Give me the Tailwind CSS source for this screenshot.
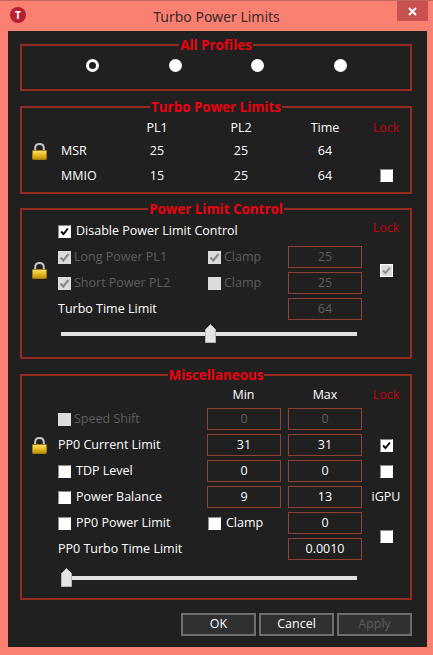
<!DOCTYPE html>
<html>
<head>
<meta charset="utf-8">
<script src="https://cdn.jsdelivr.net/npm/@tailwindcss/browser@4"></script>
</head>
<body class="m-0">
<svg width="0" height="0" class="absolute">
  <defs>
    <linearGradient id="gold" x1="0" y1="0" x2="0" y2="1"><stop offset="0" stop-color="#f8e27a"/><stop offset="0.5" stop-color="#e8bb1e"/><stop offset="1" stop-color="#b98a0c"/></linearGradient>
    <symbol id="lock" viewBox="0 0 15 17"><path d="M3.2 8V5.2C3.2 2.6 5 1 7.5 1s4.3 1.6 4.3 4.2V8" fill="none" stroke="#c4c4c4" stroke-width="2"/><rect x="0.5" y="7.5" width="14" height="9" rx="0.8" fill="url(#gold)" stroke="#a37c10"/></symbol>
    <symbol id="tick" viewBox="0 0 13 13"><path d="M2.5 6.5l2.8 3L10.5 3" fill="none" stroke="currentColor" stroke-width="2.2"/></symbol>
  </defs>
</svg>
<div class="w-[433px] h-[655px] bg-[#fa8072] border-t border-t-[#c4685c] relative overflow-hidden font-['Open_Sans','Noto_Sans',sans-serif] text-[12.5px] text-white">
  <!-- title bar -->
  <div class="h-[30px] relative flex items-center justify-center text-[14px] text-[#3a2a2a] font-['Noto_Sans',sans-serif]">
    <div class="absolute left-[10px] top-[6px] w-[16px] h-[16px] rounded-full bg-[#b71f33] flex items-center justify-center text-[10px] font-bold text-white leading-none">T</div>
    <span>Turbo Power Limits</span>
    <div class="absolute left-[397px] top-0 w-[31px] h-[20px] bg-[#c75050] flex items-center justify-center">
      <svg width="9" height="9" viewBox="0 0 9 9"><path d="M1 1l7 7M8 1l-7 7" stroke="#fff" stroke-width="2"/></svg>
    </div>
  </div>
  <!-- panel -->
  <div class="ml-[8px] w-[419px] h-[616px] bg-[#202020] pt-[13px] pl-[12px]">
    <!-- All profiles -->
    <div class="relative w-[392px] h-[47px] border-2 border-[#962a20]">
      <div class="absolute left-0 right-0 -top-[10px] flex justify-center"><span class="bg-[#202020] px-[1px] leading-[18px] text-[13.4px] font-bold text-[#ee0010]">All Profiles</span></div>
      <div class="grid grid-cols-[77px_83px_82px_83px] pt-[13px]">
        <div class="w-[13px] h-[13px] rounded-full border-[3px] border-white bg-[#202020] col-start-1 justify-self-end"></div>
        <div class="w-[13px] h-[13px] rounded-full bg-white justify-self-end"></div>
        <div class="w-[13px] h-[13px] rounded-full bg-white justify-self-end"></div>
        <div class="w-[13px] h-[13px] rounded-full bg-white justify-self-end"></div>
      </div>
    </div>
    <!-- Turbo Power Limits -->
    <div class="relative w-[392px] h-[88px] mt-[15px] border-2 border-[#962a20]">
      <div class="absolute left-0 right-0 -top-[10px] flex justify-center"><span class="bg-[#202020] px-[1px] leading-[18px] text-[13.4px] font-bold text-[#ee0010]">Turbo Power Limits</span></div>
      <div class="grid grid-cols-[29px_59px_74px_10px_74px_10px_74px_48px] ml-[10px] pt-[9px] items-center text-center">
        <div class="h-[22px] col-start-3 leading-[22px]">PL1</div>
        <div class="h-[22px] col-start-5 leading-[22px]">PL2</div>
        <div class="h-[22px] col-start-7 leading-[22px]">Time</div>
        <div class="h-[22px] col-start-8 leading-[22px] text-[#c4000e]">Lock</div>
        <div class="h-[24px] col-start-1 flex items-center"><svg width="15" height="17"><use href="#lock"/></svg></div>
        <div class="h-[24px] col-start-2 text-left leading-[24px]">MSR</div>
        <div class="h-[24px] col-start-3 leading-[24px]">25</div>
        <div class="h-[24px] col-start-5 leading-[24px]">25</div>
        <div class="h-[24px] col-start-7 leading-[24px]">64</div>
        <div class="h-[26px] col-start-2 text-left leading-[26px]">MMIO</div>
        <div class="h-[26px] col-start-3 leading-[26px]">15</div>
        <div class="h-[26px] col-start-5 leading-[26px]">25</div>
        <div class="h-[26px] col-start-7 leading-[26px]">64</div>
        <div class="h-[26px] col-start-8 flex items-center justify-center -mt-[1px]"><div class="w-[13px] h-[13px] bg-white border border-[#8a8a8a] border-r-white border-b-white"></div></div>
      </div>
    </div>
    <!-- Power Limit Control -->
    <div class="relative w-[392px] h-[151px] mt-[14px] border-2 border-[#962a20]">
      <div class="absolute left-0 right-0 -top-[10px] flex justify-center"><span class="bg-[#202020] px-[1px] leading-[18px] text-[13.4px] font-bold text-[#ee0010]">Power Limit Control</span></div>
      <div class="grid grid-cols-[26px_150px_80px_74px_48px] grid-rows-[26px_26px_26px_26px] ml-[10px] pt-[8px] items-center">
        <label class="col-start-2 col-span-2 flex items-center gap-[5px]"><span class="w-[13px] h-[13px] bg-white border border-[#8a8a8a] border-r-white border-b-white text-black flex"><svg width="11" height="11"><use href="#tick"/></svg></span>Disable Power Limit Control</label>
        <div class="col-start-5 row-start-1 text-center text-[#c4000e] -mt-[5px]">Lock</div>
        <div class="col-start-1 row-start-2 row-span-2 flex items-center"><svg width="15" height="17"><use href="#lock"/></svg></div>
        <label class="col-start-2 row-start-2 flex items-center gap-[3px] text-[#5e5e5e]"><span class="w-[13px] h-[13px] bg-[#dcdcdc] text-[#8a8a8a] flex"><svg width="13" height="13"><use href="#tick"/></svg></span>Long Power PL1</label>
        <label class="col-start-3 row-start-2 flex items-center gap-[3px] text-[#5e5e5e]"><span class="w-[13px] h-[13px] bg-[#dcdcdc] text-[#8a8a8a] flex"><svg width="13" height="13"><use href="#tick"/></svg></span>Clamp</label>
        <div class="col-start-4 row-start-2 h-[22px] border border-[#96402f] text-center leading-[20px] text-[#5e5e5e]">25</div>
        <div class="col-start-5 row-start-2 row-span-2 flex justify-center"><span class="w-[13px] h-[13px] bg-[#dcdcdc] border border-white text-[#8a8a8a] flex"><svg width="11" height="11"><use href="#tick"/></svg></span></div>
        <label class="col-start-2 row-start-3 flex items-center gap-[3px] text-[#5e5e5e]"><span class="w-[13px] h-[13px] bg-[#dcdcdc] text-[#8a8a8a] flex"><svg width="13" height="13"><use href="#tick"/></svg></span>Short Power PL2</label>
        <label class="col-start-3 row-start-3 flex items-center gap-[3px] text-[#5e5e5e]"><span class="w-[13px] h-[13px] bg-[#dcdcdc]"></span>Clamp</label>
        <div class="col-start-4 row-start-3 h-[22px] border border-[#96402f] text-center leading-[20px] text-[#5e5e5e]">25</div>
        <div class="col-start-2 row-start-4">Turbo Time Limit</div>
        <div class="col-start-4 row-start-4 h-[22px] border border-[#96402f] text-center leading-[20px] text-[#5e5e5e]">64</div>
      </div>
      <div class="relative ml-[39px] mt-[2px] w-[296px] h-[20px] flex items-center">
        <div class="w-full h-[4px] bg-[#e2e2e2]"></div>
        <svg class="absolute left-[144px] top-0" width="11" height="19" viewBox="0 0 11 19"><path d="M.5 18.5V5.5L5.5.5l5 5v13z" fill="#e4e4e4" stroke="#b4b4b4"/></svg>
      </div>
    </div>
    <!-- Miscellaneous -->
    <div class="relative w-[392px] h-[226px] mt-[15px] border-2 border-[#962a20]">
      <div class="absolute left-0 right-0 -top-[10px] flex justify-center"><span class="bg-[#202020] px-[1px] leading-[18px] text-[13.4px] font-bold text-[#ee0010]">Miscellaneous</span></div>
      <div class="grid grid-cols-[26px_149px_74px_7px_74px_48px] grid-rows-[22px_26px_26px_26px_26px_26px_26px] ml-[10px] pt-[8px] items-center">
        <div class="col-start-3 text-center -ml-[1px]">Min</div>
        <div class="col-start-5 text-center">Max</div>
        <div class="col-start-6 text-center text-[#c4000e]">Lock</div>
        <label class="col-start-2 row-start-2 flex items-center gap-[3px] text-[#5e5e5e]"><span class="w-[13px] h-[13px] bg-[#dcdcdc]"></span>Speed Shift</label>
        <div class="col-start-3 row-start-2 h-[22px] border border-[#96402f] text-center leading-[20px] text-[#5e5e5e]">0</div>
        <div class="col-start-5 row-start-2 h-[22px] border border-[#96402f] text-center leading-[20px] text-[#5e5e5e]">0</div>

        <div class="col-start-1 row-start-3 flex items-center"><svg width="15" height="17"><use href="#lock"/></svg></div>
        <div class="col-start-2 row-start-3">PP0 Current Limit</div>
        <div class="col-start-3 row-start-3 h-[22px] border border-[#96402f] text-center leading-[20px]">31</div>
        <div class="col-start-5 row-start-3 h-[22px] border border-[#96402f] text-center leading-[20px]">31</div>
        <div class="col-start-6 row-start-3 flex justify-center"><span class="w-[13px] h-[13px] bg-white border border-[#8a8a8a] border-r-white border-b-white text-black flex"><svg width="11" height="11"><use href="#tick"/></svg></span></div>

        <label class="col-start-2 row-start-4 flex items-center gap-[5px]"><span class="w-[13px] h-[13px] bg-white border border-[#8a8a8a] border-r-white border-b-white"></span>TDP Level</label>
        <div class="col-start-3 row-start-4 h-[22px] border border-[#96402f] text-center leading-[20px]">0</div>
        <div class="col-start-5 row-start-4 h-[22px] border border-[#96402f] text-center leading-[20px]">0</div>
        <div class="col-start-6 row-start-4 flex justify-center"><span class="w-[13px] h-[13px] bg-white border border-[#8a8a8a] border-r-white border-b-white"></span></div>

        <label class="col-start-2 row-start-5 flex items-center gap-[5px]"><span class="w-[13px] h-[13px] bg-white border border-[#8a8a8a] border-r-white border-b-white"></span>Power Balance</label>
        <div class="col-start-3 row-start-5 h-[22px] border border-[#96402f] text-center leading-[20px]">9</div>
        <div class="col-start-5 row-start-5 h-[22px] border border-[#96402f] text-center leading-[20px]">13</div>
        <div class="col-start-6 row-start-5 text-center">iGPU</div>

        <label class="col-start-2 row-start-6 flex items-center gap-[5px]"><span class="w-[13px] h-[13px] bg-white border border-[#8a8a8a] border-r-white border-b-white"></span>PP0 Power Limit</label>
        <label class="col-start-3 row-start-6 flex items-center gap-[5px] ml-[1px]"><span class="w-[13px] h-[13px] bg-white border border-[#8a8a8a] border-r-white border-b-white"></span>Clamp</label>
        <div class="col-start-5 row-start-6 h-[22px] border border-[#96402f] text-center leading-[20px]">0</div>

        <div class="col-start-2 row-start-7">PP0 Turbo Time Limit</div>
        <div class="col-start-5 row-start-7 h-[22px] border border-[#96402f] text-center leading-[20px]">0.0010</div>
        <div class="col-start-6 row-start-6 row-span-2 flex justify-center"><span class="w-[13px] h-[13px] bg-white border border-[#8a8a8a] border-r-white border-b-white"></span></div>
      </div>
      <div class="relative ml-[39px] mt-[6px] w-[296px] h-[20px] flex items-center">
        <div class="w-full h-[4px] bg-[#e2e2e2]"></div>
        <svg class="absolute left-0 top-0" width="11" height="19" viewBox="0 0 11 19"><path d="M.5 18.5V5.5L5.5.5l5 5v13z" fill="#e4e4e4" stroke="#b4b4b4"/></svg>
      </div>
    </div>
    <!-- buttons -->
    <div class="w-[392px] mt-[13px] flex justify-end gap-[3px]">
      <div class="w-[75px] h-[23px] border-2 border-[#6e6e6e] bg-[#303030] flex items-center justify-center">OK</div>
      <div class="w-[75px] h-[23px] border-2 border-[#6e6e6e] bg-[#303030] flex items-center justify-center">Cancel</div>
      <div class="w-[75px] h-[23px] border-2 border-[#6e6e6e] bg-[#303030] flex items-center justify-center text-[#5e5e5e]">Apply</div>
    </div>
  </div>
</div>
</body>
</html>
